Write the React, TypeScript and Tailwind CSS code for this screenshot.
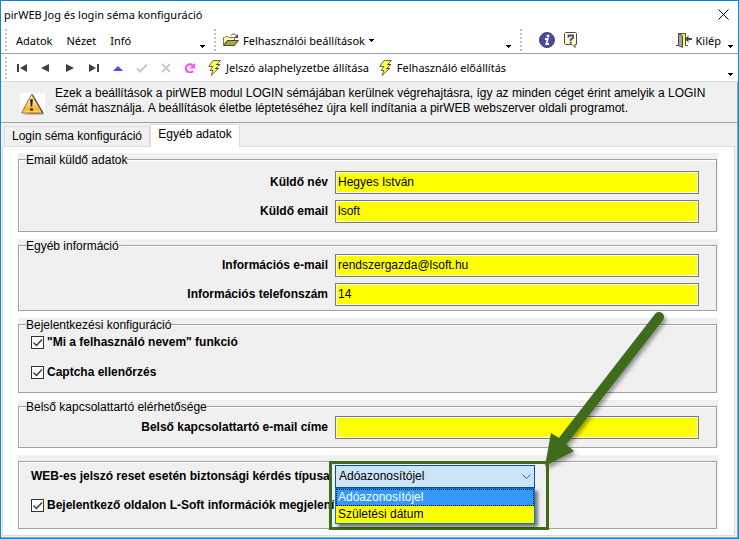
import type { ReactNode } from "react";

function Grip() {
  return (
    <span className="flex w-[2px] shrink-0 flex-col gap-[2px]" aria-hidden="true">
      {[0, 1, 2, 3, 4, 5].map((i) => (
        <i key={i} className="block h-[2px] w-[2px] bg-[#c0c0c0]" />
      ))}
    </span>
  );
}

function Caret() {
  return (
    <svg width="5" height="3" viewBox="0 0 5 3" className="shrink-0" aria-hidden="true" shapeRendering="crispEdges">
      <path d="M0 0h5v1H4v1H3v1H2V2H1V1H0z" fill="#000" />
    </svg>
  );
}

function Overflow({ label }: { label: string }) {
  return (
    <button type="button" aria-label={label} className="flex h-full w-[9px] shrink-0 items-end justify-center pb-[5px]">
      <Caret />
    </button>
  );
}

function Folder() {
  return (
    <svg width="16" height="14" viewBox="0 0 16 14" aria-hidden="true">
      <path d="M.5 12.5V4.500h1l1-1h2l1 1h6v3H4z" fill="#ffffa0" stroke="#7b7b4a" />
      <path d="M.8 12.500l3.700-5h11l-4 5z" fill="#a5a54a" stroke="#4a4a30" />
      <path d="M8 2.500c1-2 4-2.300 6 1" fill="none" stroke="#4a4a4a" />
      <path d="M15 1v4h-4z" fill="#4a4a4a" />
    </svg>
  );
}

function Bolt() {
  return (
    <svg width="13" height="16" viewBox="0 0 13 16" aria-hidden="true">
      <path
        d="M5 .5h7.500L8.500 4.500h3.500L7.500 8.500h3L3 15.500l2-5H2L5 6.500H.8z"
        fill="#ffff50"
        stroke="#6a6a4a"
        strokeLinejoin="round"
      />
      <path d="M12 4.500H8.500M10.500 8.500h-3" stroke="#3a3a3a" />
    </svg>
  );
}

function Info() {
  return (
    <svg width="16" height="16" viewBox="0 0 16 16" aria-hidden="true">
      <circle cx="8" cy="8" r="7.500" fill="#4a4aa5" stroke="#42426b" />
      <circle cx="9" cy="4" r="1.500" fill="#fff" />
      <path d="M6 7h2.700L7.300 12H10" fill="none" stroke="#fff" strokeWidth="1.800" />
    </svg>
  );
}

function Help() {
  return (
    <svg width="14" height="16" viewBox="0 0 14 16" aria-hidden="true">
      <path d="M1.500.5h10l1 1v11h-1.500v3l-3-3h-6.500l-1-1v-10z" fill="#ffffb8" stroke="#4a4a4a" />
      <path d="M4.500 5.500V3.500h4.500V6L6.700 7.500V9" fill="none" stroke="#4242a5" strokeWidth="1.800" />
      <path d="M5.700 9.800h2v1.700h-2z" fill="#4242a5" />
    </svg>
  );
}

function Door() {
  return (
    <svg width="16" height="15" viewBox="0 0 16 15" aria-hidden="true">
      <path d="M0 12.500h2.500V.5h7v12H12" fill="none" stroke="#4a4a4a" />
      <path d="M6 1h3v11H6z" fill="#ffff40" />
      <path d="M2.500.5l4 2v12l-4-2z" fill="#a5a5a5" stroke="#4a4a4a" />
      <path d="M16 6h-5" stroke="#4a4a4a" strokeWidth="2" />
      <path d="M12.500 2.500v7L8.500 6z" fill="#4a4a4a" />
    </svg>
  );
}

function Warning() {
  return (
    <svg width="26" height="22" viewBox="0 0 26 22" aria-hidden="true">
      <defs>
        <linearGradient id="amber" x1="0" y1="0" x2="0" y2="1">
          <stop offset="0" stopColor="#fff4c8" />
          <stop offset="0.55" stopColor="#ffd070" />
          <stop offset="0.8" stopColor="#fbb040" />
          <stop offset="1" stopColor="#ffe84c" />
        </linearGradient>
      </defs>
      <path d="M0 0h25v21H0z" fill="#fff" />
      <path d="M3 21.500h21L22 17z" fill="#555" opacity=".6" />
      <path d="M11.500 1.500L22.500 20H1.500z" fill="url(#amber)" stroke="#a8662a" strokeLinejoin="round" />
      <path d="M12.500 1.500L23.200 20" stroke="#5a3a2a" />
      <path d="M10.500 6.500h2l-.6 7h-.8z" fill="#222" stroke="#222" strokeWidth=".6" />
      <path d="M10 15.500h3v2h-3z" fill="#222" />
    </svg>
  );
}

const navItems: { label: string; art: ReactNode }[] = [
  { label: "Első", art: <path d="M1 1h2v8H1zM11 1v8L4 5z" fill="#404040" /> },
  { label: "Előző", art: <path d="M9 1v8L1 5z" fill="#404040" /> },
  { label: "Következő", art: <path d="M2 1v8l8-4z" fill="#404040" /> },
  { label: "Utolsó", art: <path d="M9 1h2v8H9zM1 1v8l7-4z" fill="#404040" /> },
  { label: "Szerkesztés", art: <path d="M1 8h10L6 3z" fill="#4848ff" /> },
  { label: "Mentés", art: <path d="M1 5.500L4 8.500 11 1.500" fill="none" stroke="#c8c8c8" strokeWidth="2" /> },
  { label: "Elvetés", art: <path d="M2 1l8 8M10 1L2 9" fill="none" stroke="#c8c8c8" strokeWidth="2" /> },
  {
    label: "Frissítés",
    art: (
      <>
        <path d="M9 8A4 4 0 1 1 8.500 2.300" fill="none" stroke="#ff48ff" strokeWidth="2.200" />
        <path d="M11 0v5.500H5.500z" fill="#ff48ff" />
      </>
    ),
  },
];

function Group({ title, children, className }: { title?: string; children: ReactNode; className: string }) {
  return (
    <div className={title ? "bg-[#f0f0f0] pr-px" : "bg-[#f0f0f0] pt-[6px] pr-px"}>
      <fieldset className={`min-w-0 border border-[#a0a0a0] shadow-[inset_1px_1px_0_#fff] ${className}`}>
        {title && <legend className="ml-[7px] h-[13px] bg-[#f0f0f0] leading-[15px]">{title}</legend>}
        {children}
      </fieldset>
    </div>
  );
}

function Field({ id, label, value }: { id: string; label: string; value: string }) {
  return (
    <div className="flex items-center gap-[7px] pr-[17px]">
      <label htmlFor={id} className="w-[309px] shrink-0 text-right font-bold">
        {label}
      </label>
      <input
        id={id}
        type="text"
        defaultValue={value}
        className="h-[23px] min-w-0 flex-1 border border-[#7a7a7a] bg-[#ffff00] px-[2px] pb-[2px] shadow-[inset_0_0_0_1px_#fff] outline-none"
      />
    </div>
  );
}

function Check({ label }: { label: string }) {
  return (
    <label className="flex items-center gap-[3px] font-bold whitespace-nowrap">
      <span className="grid shrink-0">
        <input
          type="checkbox"
          defaultChecked
          className="peer col-start-1 row-start-1 h-[13px] w-[13px] appearance-none border border-[#333] bg-white"
        />
        <svg
          width="13"
          height="13"
          viewBox="0 0 13 13"
          className="pointer-events-none invisible col-start-1 row-start-1 peer-checked:visible"
          aria-hidden="true"
        >
          <path d="M2.500 6.500l3 3 5.500-6" fill="none" stroke="#333" strokeWidth="1.300" />
        </svg>
      </span>
      {label}
    </label>
  );
}

export default function App() {
  return (
    <div className="min-h-screen border border-[#1883d7] bg-white font-['Liberation_Sans',Arial,sans-serif] text-[12px] leading-[15px] text-black">
      <header className="flex h-[26px] items-center justify-between pr-[9px] pl-[3px] font-['Noto_Sans',sans-serif] text-[11px]">
        <h1>pirWEB Jog és login séma konfiguráció</h1>
        <button type="button" aria-label="Bezárás">
          <svg width="11" height="11" viewBox="0 0 11 11" aria-hidden="true">
            <path d="M.5.5l10 10M10.500.5l-10 10" stroke="#000" />
          </svg>
        </button>
      </header>

      <div className="flex h-[27px] items-center border-b border-[#a0a0a0] pl-1 font-['Noto_Sans',sans-serif] text-[11px]">
        <nav className="flex h-full w-[209px] shrink-0 items-center">
          <Grip />
          <div className="flex flex-1 gap-[14px] pl-[9px]">
            <button type="button">Adatok</button>
            <button type="button">Nézet</button>
            <button type="button">Infó</button>
          </div>
          <span className="flex h-full pr-[7px]">
            <Overflow label="További menük" />
          </span>
        </nav>
        <div className="flex h-full w-[306px] shrink-0 items-center">
          <Grip />
          <button type="button" className="flex items-center gap-1 pl-[7px] whitespace-nowrap">
            <Folder />
            <span>Felhasználói beállítások</span>
            <Caret />
          </button>
          <span className="ml-auto flex h-full pr-[7px]">
            <Overflow label="További beállítások" />
          </span>
        </div>
        <div className="flex h-full flex-1 items-center">
          <Grip />
          <div className="flex flex-1 gap-[9px] pl-[17px]">
            <button type="button" aria-label="Információ"><Info /></button>
            <button type="button" aria-label="Súgó"><Help /></button>
          </div>
          <button type="button" className="flex items-center gap-1 pr-[5px]">
            <Door />
            <span>Kilép</span>
          </button>
          <span className="flex h-full pr-[3px]">
            <Overflow label="További elemek" />
          </span>
        </div>
      </div>

      <div className="flex h-7 items-center border-b border-[#dcdcdc] pl-1 font-['Noto_Sans',sans-serif] text-[11px]">
        <Grip />
        <div className="flex items-center pl-[3px]">
          {navItems.map((n) => (
            <button key={n.label} type="button" aria-label={n.label} className="flex h-6 w-6 items-center justify-center">
              <svg width="12" height="10" viewBox="0 0 12 10" aria-hidden="true">{n.art}</svg>
            </button>
          ))}
        </div>
        <button type="button" className="flex items-center gap-[5px] pl-[6px] whitespace-nowrap">
          <Bolt />
          <span>Jelszó alaphelyzetbe állítása</span>
        </button>
        <button type="button" className="flex items-center gap-[5px] pl-[10px] whitespace-nowrap">
          <Bolt />
          <span>Felhasználó előállítás</span>
        </button>
        <span className="ml-auto flex h-full pr-[3px]">
          <Overflow label="További műveletek" />
        </span>
      </div>

      <div className="border-r border-b border-r-[#a0a0a0] border-b-[#a0a0a0] bg-[#f0f0f0] pb-px">
        <div className="flex h-[41px] items-start gap-[9px] border-b border-[#a0a0a0] pt-[4px] pl-[19px]">
          <span className="shrink-0 pt-[7px]"><Warning /></span>
          <p className="max-w-[664px]">
            Ezek a beállítások a pirWEB modul LOGIN sémájában kerülnek végrehajtásra, így az minden céget érint amelyik a LOGIN
            sémát használja. A beállítások életbe léptetéséhez újra kell indítania a pirWEB webszerver oldali programot.
          </p>
        </div>

        <div role="tablist" className="flex h-[23px] items-end pl-[3px]">
          <button type="button" role="tab" aria-selected="false" className="h-5 w-[146px] border border-b-0 border-[#dcdcdc] whitespace-nowrap">
            Login séma konfiguráció
          </button>
          <button type="button" role="tab" aria-selected="true" className="relative -mb-px h-[23px] w-[90px] border border-b-0 border-[#dcdcdc] bg-white pb-[3px] whitespace-nowrap">
            Egyéb adatok
          </button>
        </div>

        <main className="mr-[2px] ml-px flex flex-col gap-[7px] border border-[#dcdcdc] bg-white pt-[6px] pr-4 pb-[6px] pl-[15px]">
          <Group title="Email küldő adatok" className="h-[79px]">
            <div className="flex flex-col gap-[6px] pt-[5px]">
              <Field id="kuldo-nev" label="Küldő név" value="Hegyes István" />
              <Field id="kuldo-email" label="Küldő email" value="lsoft" />
            </div>
          </Group>
          <Group title="Egyéb információ" className="h-[72px]">
            <div className="flex flex-col gap-[6px] pt-[2px]">
              <Field id="info-email" label="Információs e-mail" value="rendszergazda@lsoft.hu" />
              <Field id="info-telefon" label="Információs telefonszám" value="14" />
            </div>
          </Group>
          <Group title="Bejelentkezési konfiguráció" className="h-[75px]">
            <div className="flex flex-col gap-[15px] pt-1 pl-3">
              <Check label={'"Mi a felhasználó nevem" funkció'} />
              <Check label="Captcha ellenőrzés" />
            </div>
          </Group>
          <Group title="Belső kapcsolattartó elérhetősége" className="h-[48px]">
            <div className="pt-[3px]">
              <Field id="belso-email" label="Belső kapcsolattartó e-mail címe" value="" />
            </div>
          </Group>
          <Group className="h-[68px] pt-[3px] pl-3">
            <div className="flex items-center">
              <label htmlFor="kerdes" className="w-[304px] shrink-0 font-bold whitespace-nowrap">
                WEB-es jelszó reset esetén biztonsági kérdés típusa
              </label>
              <div className="relative z-10 w-[200px]">
                <select
                  id="kerdes"
                  className="block h-[23px] w-full appearance-none border border-[#005499] bg-[#cce4f7] px-[3px] outline-none"
                >
                  <option>Adóazonosítójel</option>
                  <option>Születési dátum</option>
                </select>
                <svg className="pointer-events-none absolute top-[9px] right-1" width="9" height="6" viewBox="0 0 9 6" aria-hidden="true">
                  <path d="M.5.5l4 4 4-4" fill="none" stroke="#555" />
                </svg>
                <ul
                  role="listbox"
                  aria-label="Biztonsági kérdés típusa"
                  className="absolute top-[23px] left-0 w-full border border-[#0078d7] bg-[#ffff00] leading-[17px] shadow-[3px_3px_3px_rgba(0,0,0,0.5)]"
                >
                  <li role="option" aria-selected="true" className="bg-[#3399ff] px-[2px] text-white outline-1 -outline-offset-1 outline-dotted outline-black">
                    Adóazonosítójel
                  </li>
                  <li role="option" aria-selected="false" className="px-[2px]">Születési dátum</li>
                </ul>
                <svg
                  className="pointer-events-none absolute -top-[155px] -left-[8px] -z-10 overflow-visible drop-shadow-[2px_3px_2px_rgba(0,0,0,0.4)]"
                  width="342"
                  height="222"
                  viewBox="0 0 342 222"
                  aria-hidden="true"
                >
                  <path d="M332 7L235 132" stroke="#3f6c1b" strokeWidth="10" strokeLinecap="round" />
                  <path d="M218 156L224 123 232 128 240 135 247 141z" fill="#3f6c1b" />
                </svg>
                <div className="pointer-events-none absolute -top-[4px] -left-[6px] -z-10 h-[69px] w-[220px] border-[3px] border-[#3f6c1b]" />
              </div>
            </div>
            <div className="pt-[10px]">
              <Check label="Bejelentkező oldalon L-Soft információk megjelenít" />
            </div>
          </Group>
        </main>
      </div>
    </div>
  );
}
